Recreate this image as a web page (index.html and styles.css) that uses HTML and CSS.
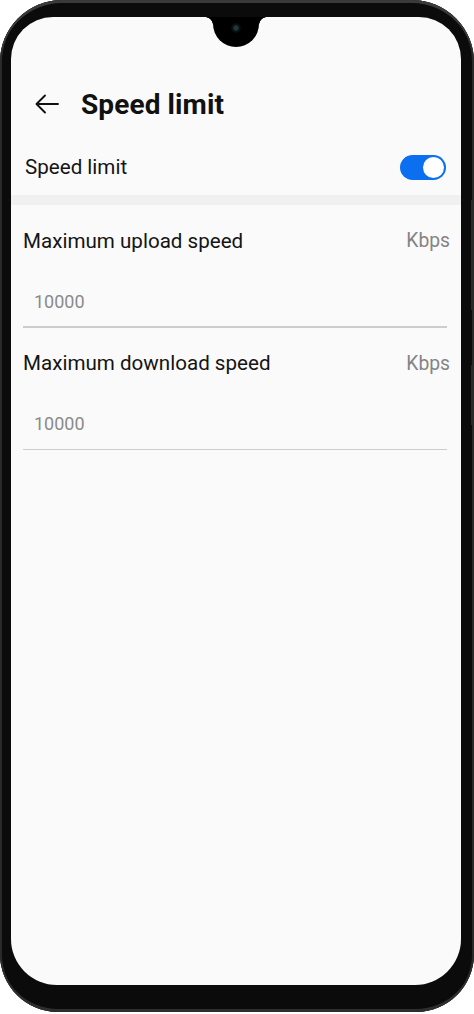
FILE: index.html
```html
<!DOCTYPE html>
<html>
<head>
<meta charset="utf-8">
<link rel="stylesheet" href="styles.css">
</head>
<body>
<div class="phone">
  <div class="btn btn-a"></div>
  <div class="btn btn-b"></div>
  <div class="screen">
    <div class="notch"><span class="cam"></span></div>
    <header class="header">
      <svg class="back" width="24" height="20" viewBox="0 0 24 20"><path d="M23 10H2M10 1.5L1.5 10L10 18.5" fill="none" stroke="#111" stroke-width="1.9" stroke-linecap="round" stroke-linejoin="round"/></svg>
      <h1 class="title">Speed limit</h1>
    </header>
    <div class="switch-row">
      <span class="label">Speed limit</span>
      <span class="toggle"><span class="thumb"></span></span>
    </div>
    <div class="band"></div>
    <div class="field">
      <div class="field-head"><span class="label">Maximum upload speed</span><span class="unit">Kbps</span></div>
      <div class="input">10000</div>
      <div class="rule"></div>
    </div>
    <div class="field">
      <div class="field-head"><span class="label">Maximum download speed</span><span class="unit">Kbps</span></div>
      <div class="input">10000</div>
      <div class="rule"></div>
    </div>
  </div>
</div>
</body>
</html>
```
FILE: styles.css
```css
html, body { margin: 0; padding: 0; background: #fff; }
body { width: 474px; height: 1014px; overflow: hidden; font-family: Roboto, "Noto Sans", sans-serif; }
.phone {
  position: relative;
  width: 474px; height: 1012px;
  box-sizing: border-box;
  padding: 17px 13px 0 11px;
  background: #0b0b0b;
  border-radius: 62px 62px 58px 58px;
  box-shadow: inset 0 3px 0 #3a3a3a, inset 0 -3px 0 #2e2e2e, inset 2px 0 0 #2a2a2a, inset -2px 0 0 #2a2a2a;
}
.btn { position: absolute; right: 0; width: 3px; background: #2a2a2a; }
.btn-a { top: 200px; height: 110px; }
.btn-b { top: 365px; height: 60px; }
.screen {
  position: relative;
  height: 968px;
  background: #fafafa;
  border-radius: 42px 42px 46px 46px;
  overflow: hidden;
}
.notch {
  position: absolute; top: 0; left: 50%;
  width: 46px; height: 30px; margin-left: -23px;
  background: #000;
  border-radius: 0 0 23px 23px;
}
.notch::before, .notch::after {
  content: ""; position: absolute; top: 0; width: 8px; height: 8px;
  background: radial-gradient(circle at 0 100%, transparent 7.5px, #000 8px);
}
.notch::before { left: -8px; }
.notch::after { right: -8px; background: radial-gradient(circle at 100% 100%, transparent 7.5px, #000 8px); }
.cam {
  position: absolute; left: 50%; top: 6px; width: 10px; height: 10px; margin-left: -5px;
  border-radius: 50%; background: radial-gradient(circle, #1f3a3a 0 2px, #0d1616 3px, #050808 5px);
}
.header { display: flex; align-items: center; height: 42px; padding: 66px 0 0 24px; }
.back { flex: none; }
.title { margin: 0 0 0 22px; font-size: 28px; font-weight: 700; color: #111; letter-spacing: 0.1px; }
.switch-row { display: flex; align-items: center; justify-content: space-between; height: 56px; margin-top: 14px; padding: 0 15px 0 14px; }
.label { font-size: 20.6px; color: #141414; }
.toggle { position: relative; width: 46px; height: 25px; border-radius: 13px; background: #0b6ff0; }
.thumb { position: absolute; right: 2px; top: 2px; width: 21px; height: 21px; border-radius: 50%; background: #fff; }
.band { height: 10px; background: #f0f0f0; }
.field { padding: 0 14px 0 12px; }
.field-head { display: flex; align-items: center; justify-content: space-between; height: 71px; }
.unit { font-size: 19.3px; color: #848484; margin-right: -3px; }
.input { height: 50px; display: flex; align-items: center; padding-left: 11px; font-size: 18px; color: #8a8a8a; }
.rule { height: 1.5px; background: #cdcdcd; }
```
